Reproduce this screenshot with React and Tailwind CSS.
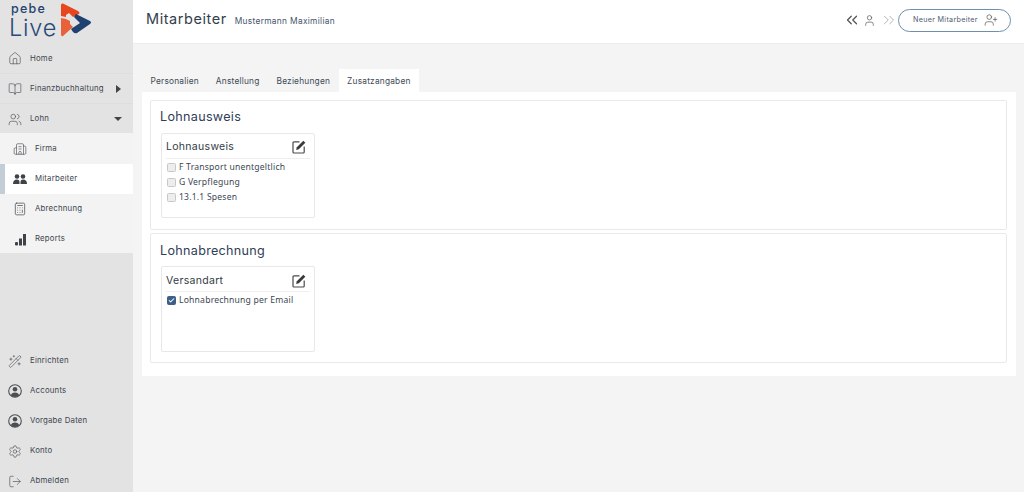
import React from "react";
import { Home, BookOpen, Users, Wand2, Settings, LogOut, ChevronsLeft, ChevronsRight, User, UserPlus, Check, Building2, Calculator } from "lucide-react";

const Logo = () => (
  <svg width="34" height="36" viewBox="0 0 34 36" className="absolute left-[60px] top-[2px]">
    <path d="M1 3 Q1 1 3 1.500 L18 9 Q21 11 18 12.500 L13 15 L9 11 L6 13 L6 15 L1 14 Z" fill="#e8461e" />
    <path d="M1 16 L6 17 L10 19 L10 22 L13 25 L3 34 Q1 35 1 32 Z" fill="#e8613a" />
    <path d="M16 12 L30 19 Q32 20.500 30 22 L17 31 Q15 32 13 30 L11 27 L20 21 L14 15 Z" fill="#1f4270" />
  </svg>
);

const EditIcon = () => (
  <svg width="14" height="14" viewBox="0 0 14 14" className="shrink-0">
    <path d="M7.500 1.800 H2 Q1 1.800 1 2.800 V12 Q1 13 2 13 H11.200 Q12.200 13 12.200 12 V6.500" fill="none" stroke="#4a4a4a" strokeWidth="1.200" />
    <path d="M11.300 0.700 L13.300 2.700 L6.800 9.200 L4.100 9.900 L4.800 7.200 Z" fill="#3a3a3a" />
  </svg>
);

const Row = ({ icon, label, indent, active, arrow, dotted }) => (
  <div className={`relative flex h-[30px] shrink-0 items-center ${active ? "bg-white" : ""} ${indent ? "pl-[13px]" : "pl-[8px]"} ${dotted ? "border-b border-dotted border-[#d9d9d9]" : ""}`}>
    {active && <div className="absolute left-0 top-0 h-full w-[5px] bg-[#c3cdd6]" />}
    <span className="flex w-[14px] items-center justify-center text-[#4b4f54]">{icon}</span>
    <span className="ml-[8px] text-[7.800px] tracking-[0.2px] text-[#3e4650]">{label}</span>
    {arrow}
  </div>
);

const Tab = ({ label, active }) => (
  <div className={`flex h-[23px] items-center px-[8.500px] pt-[1px] text-[8.350px] tracking-[0.2px] text-[#3f4b57] ${active ? "bg-white" : ""}`}>{label}</div>
);

const Box = ({ title, items, height, titlePad }) => (
  <div className={`w-[154px] rounded-[2px] border border-[#e8e8e8] bg-white px-[4px] ${height}`}>
    <div className={`flex h-[25px] items-center justify-between border-b border-[#efefef] pr-[4px] ${titlePad}`}>
      <span className="text-[10.500px] tracking-[0.3px] text-[#333b45]">{title}</span>
      <EditIcon />
    </div>
    <div className="pt-[1px]">
      {items.map(([label, checked]) => (
        <div key={label} className="flex h-[15px] items-center">
          <span className={`ml-[1px] flex size-[9px] items-center justify-center rounded-[1.500px] border ${checked ? "border-[#3d5f8a] bg-[#3d5f8a]" : "border-[#c8c8c8] bg-[#ededed]"}`}>
            {checked && <Check size={7} strokeWidth={3.500} className="text-white" />}
          </span>
          <span className="ml-[3px] text-[8.600px] tracking-[0.2px] text-[#3c4754]" style={{ fontFamily: '"Noto Sans", sans-serif' }}>{label}</span>
        </div>
      ))}
    </div>
  </div>
);

const Section = ({ title, box, headPad }) => (
  <section className="h-[130px] rounded-[2px] border border-[#e9e9e9] bg-white pl-[10px]">
    <h2 className={`-ml-[1px] flex h-[32px] items-center text-[12.600px] font-normal tracking-[0.3px] text-[#2f4056] ${headPad}`}>{title}</h2>
    {box}
  </section>
);

const BarsIcon = () => (
  <svg width="13" height="13" viewBox="0 0 13 13" fill="#3f4348"><rect x="1" y="9" width="3" height="3.500" rx="1" /><rect x="5" y="5.500" width="3" height="7" /><rect x="9" y="1" width="3" height="11.500" /></svg>
);
const PeopleIcon = () => (
  <svg width="14" height="11" viewBox="0 0 14 11" fill="#3f4348"><circle cx="4" cy="2.500" r="2.300" /><circle cx="10" cy="2.500" r="2.300" /><path d="M0 10 Q0 5.500 4 5.500 Q6.500 5.500 6.500 8 L6.500 10 Z" /><path d="M7.500 10 L7.500 8 Q7.500 5.500 10 5.500 Q14 5.500 14 10 Z" /></svg>
);
const AccountIcon = () => (
  <svg width="14" height="14" viewBox="0 0 14 14"><circle cx="7" cy="7" r="6.300" fill="none" stroke="#4b4f54" strokeWidth="1.100" /><circle cx="7" cy="5.300" r="2.300" fill="#4b4f54" /><path d="M2.800 11.500 Q3.500 8.500 7 8.500 Q10.500 8.500 11.200 11.500 Q7 14.500 2.800 11.500 Z" fill="#4b4f54" /></svg>
);

export default function App() {
  return (
    <div className="flex h-screen overflow-hidden bg-[#f4f4f4]" style={{ fontFamily: 'Inter, "Open Sans", sans-serif' }}>
      <aside className="relative flex h-full w-[133px] shrink-0 flex-col overflow-hidden bg-[#e3e3e3]">
        <div className="relative h-[44px] shrink-0">
          <div className="absolute left-[11px] top-[2px] text-[12.500px] font-medium leading-[13px] tracking-[1.200px] text-[#1f4270]">pebe</div>
          <div className="absolute left-[9px] top-[18px] text-[23.500px] font-light leading-[19px] tracking-[0.8px] text-[#2b4a78]">Live</div>
          <Logo />
        </div>
        <Row dotted icon={<Home size={15} strokeWidth={1.100} />} label="Home" />
        <Row dotted icon={<BookOpen size={16} strokeWidth={1.100} />} label="Finanzbuchhaltung" arrow={<span className="ml-auto mr-[12px] h-0 w-0 border-y-[4px] border-l-[5px] border-y-transparent border-l-[#444]" />} />
        <Row icon={<Users size={15} strokeWidth={1.100} />} label="Lohn" arrow={<span className="ml-auto mr-[11px] h-0 w-0 border-x-[4px] border-t-[4px] border-x-transparent border-t-[#444]" />} />
        <div className="-mt-[1px] h-[120px] bg-[#f3f3f3] pt-[1px]">
          <Row indent icon={<Building2 size={14} strokeWidth={1.100} />} label="Firma" />
          <Row indent active icon={<PeopleIcon />} label="Mitarbeiter" />
          <Row indent icon={<Calculator size={14} strokeWidth={1.300} />} label="Abrechnung" />
          <Row indent icon={<BarsIcon />} label="Reports" />
        </div>
        <div className="mb-[-4px] mt-auto">
          <Row icon={<Wand2 size={15} strokeWidth={1.100} />} label="Einrichten" />
          <Row icon={<AccountIcon />} label="Accounts" />
          <Row icon={<AccountIcon />} label="Vorgabe Daten" />
          <Row icon={<Settings size={15} strokeWidth={1.100} />} label="Konto" />
          <Row icon={<LogOut size={15} strokeWidth={1.100} />} label="Abmelden" />
        </div>
      </aside>
      <main className="flex min-w-0 flex-1 flex-col">
        <header className="flex h-[44px] shrink-0 items-center justify-between border-b border-[#ececec] bg-white pl-[13px] pr-[13px]">
          <div className="mb-[6px] flex items-baseline">
            <h1 className="text-[14.500px] font-normal tracking-[0.55px] text-[#333e4b]">Mitarbeiter</h1>
            <span className="ml-[8px] text-[8.400px] tracking-[0.3px] text-[#46566a]">Mustermann Maximilian</span>
          </div>
          <div className="mb-[3px] flex items-center">
            <ChevronsLeft size={18} strokeWidth={1.700} className="text-[#555]" />
            <User size={13} strokeWidth={1.300} className="ml-[2px] text-[#555]" />
            <ChevronsRight size={18} strokeWidth={1.200} className="ml-[4px] text-[#aaa]" />
            <button className="flex h-[23px] w-[113px] items-center justify-between rounded-full border border-[#6d8fb0] bg-white pl-[14px] pr-[12px] text-[7.200px] tracking-[0.3px] text-[#50606f]">
              Neuer Mitarbeiter
              <UserPlus size={14} strokeWidth={1.200} className="text-[#555]" />
            </button>
          </div>
        </header>
        <div className="pl-[9px] pr-[8px] pt-[25px]">
          <nav className="flex h-[23px]">
            <Tab label="Personalien" />
            <Tab label="Anstellung" />
            <Tab label="Beziehungen" />
            <Tab label="Zusatzangaben" active />
          </nav>
          <div className="flex h-[284px] flex-col gap-[3px] bg-white pb-[13px] pl-[8px] pr-[9px] pt-[8px]">
            <Section title="Lohnausweis" headPad="" box={<Box title="Lohnausweis" titlePad="pt-[2px]" height="h-[85px]" items={[["F Transport unentgeltlich", false], ["G Verpflegung", false], ["13.1.1 Spesen", false]]} />} />
            <Section title="Lohnabrechnung" headPad="pt-[3px]" box={<Box title="Versandart" titlePad="pt-[3px]" height="h-[86px]" items={[["Lohnabrechnung per Email", true]]} />} />
          </div>
        </div>
      </main>
    </div>
  );
}
